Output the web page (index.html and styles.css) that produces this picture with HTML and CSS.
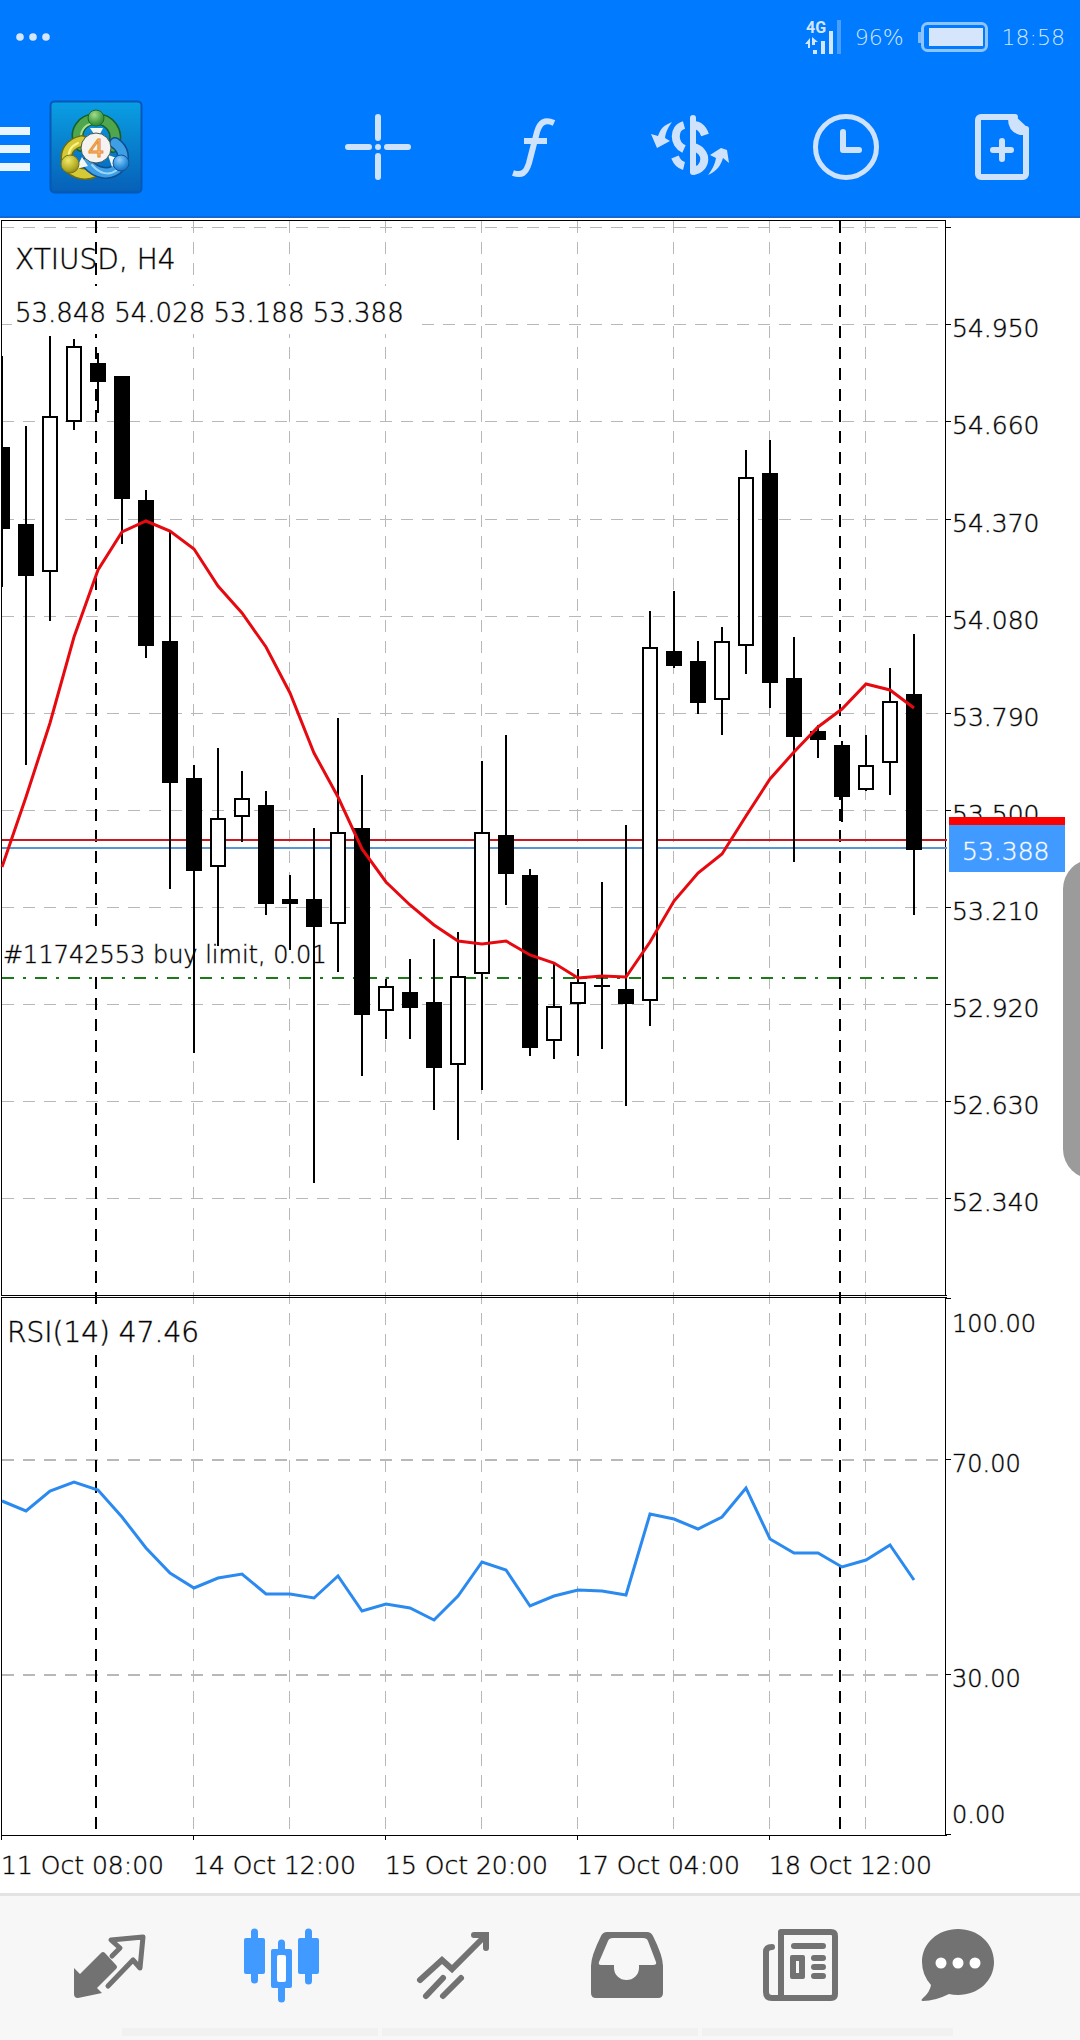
FILE: index.html
```html
<!DOCTYPE html>
<html lang="en">
<head>
<meta charset="utf-8">
<meta name="viewport" content="width=device-width, initial-scale=1">
<title>XTIUSD, H4</title>
<link rel="stylesheet" href="styles.css">
</head>
<body>
<div class="app">
  <header class="header">
    <div class="status">
      <svg class="status-dots" viewBox="0 0 36 10" aria-hidden="true"><circle cx="5" cy="5" r="3.8"/><circle cx="18" cy="5" r="3.8"/><circle cx="31" cy="5" r="3.8"/></svg>
      <div class="status-info">
        <svg class="signal" viewBox="0 0 36 36" aria-label="4G signal">
          <text x="1" y="14" class="signal-text">4G</text>
          <path d="M0 25l5-6v10h-2v-4zM7 18l6 5h-3v3h-3zM8 31h4v4h-4zM16 22h4v13h-4zM24 12h4v23h-4z"/>
          <path d="M32 1h4v34h-4z" opacity=".35"/>
        </svg>
        <span>96%</span>
        <svg class="battery" viewBox="0 0 70 32" aria-hidden="true">
          <rect x="4.500" y="2.500" width="64" height="27" rx="5" class="battery-frame"/>
          <path d="M0 11h3v11H0z" opacity=".6"/><path d="M11 7h54v18H11z"/>
        </svg>
        <time>18:58</time>
      </div>
    </div>
    <div class="toolbar">
      <button class="menu" type="button" aria-label="Menu">
        <svg class="menu-icon" viewBox="0 0 142 92" aria-hidden="true">
          <defs>
            <linearGradient id="tile" x1="0" y1="0" x2="0" y2="1"><stop offset="0" stop-color="#0a9fe4"/><stop offset=".5" stop-color="#087fcd"/><stop offset="1" stop-color="#0660b8"/></linearGradient>
            <radialGradient id="green" cx=".4" cy=".3" r=".8"><stop offset="0" stop-color="#a5dc8c"/><stop offset=".6" stop-color="#45a046"/><stop offset="1" stop-color="#237a32"/></radialGradient>
            <radialGradient id="yellow" cx=".4" cy=".3" r=".8"><stop offset="0" stop-color="#f1e868"/><stop offset=".6" stop-color="#b8b02a"/><stop offset="1" stop-color="#7d7a14"/></radialGradient>
            <radialGradient id="blue" cx=".4" cy=".3" r=".8"><stop offset="0" stop-color="#8fd0fa"/><stop offset=".6" stop-color="#2f8fdc"/><stop offset="1" stop-color="#1460a8"/></radialGradient>
          </defs>
          <path d="M0 26h30v8H0zM0 44h30v8H0zM0 62h30v8H0z" fill="#e9f6ff"/>
          <rect x="50.500" y=".5" width="91" height="91" rx="4" fill="url(#tile)" stroke="#0558b5" stroke-width="2"/>
          <g fill="none" stroke-linecap="round">
            <path d="M81 45c-9-15 2-27 15-27s24 12 17 28" stroke="#155f2a" stroke-width="12"/>
            <path d="M81 45c-9-15 2-27 15-27s24 12 17 28" stroke="#4fa64c" stroke-width="9"/>
            <path d="M81 38c-1-10 6-16 15-16" stroke="#a9dd94" stroke-width="2"/>
            <path d="M82 40c-13 3-17 12-15 21 3 10 16 15 27 10" stroke="#6f6c10" stroke-width="12"/>
            <path d="M82 40c-13 3-17 12-15 21 3 10 16 15 27 10" stroke="#d5c935" stroke-width="9"/>
            <path d="M78 42c-9 4-10 10-9 16" stroke="#fbf38a" stroke-width="2"/>
            <path d="M115 42c9 6 10 16 5 23-9 11-24 8-33-3" stroke="#0d4e92" stroke-width="12"/>
            <path d="M115 42c9 6 10 16 5 23-9 11-24 8-33-3" stroke="#3e9fe4" stroke-width="9"/>
            <path d="M92 64c8 9 17 11 25 5" stroke="#9cd7fb" stroke-width="2"/>
          </g>
          <path d="M82 56l-6 12 12-3zM108 54l4 12 8-8zM90 27l4 6h6l3-6z" fill="#f2f7f2"/>
          <circle cx="96" cy="17" r="8" fill="url(#green)" stroke="#1c692b"/>
          <circle cx="70" cy="63" r="9" fill="url(#yellow)" stroke="#77730f"/>
          <circle cx="121" cy="62" r="8" fill="url(#blue)" stroke="#10559b"/>
          <circle cx="96" cy="47" r="15" fill="#f4f3f1" stroke="#46564e"/>
          <text x="96" y="56" class="logo-digit">4</text>
        </svg>
      </button>
      <button class="tool" type="button" aria-label="Crosshair"><svg viewBox="0 0 72 72" class="line"><path d="M6 36h21M45 36h21M36 6v21M36 45v21"/><circle cx="36" cy="36" r="3" class="solid"/></svg></button>
      <button class="tool" type="button" aria-label="Indicators"><svg viewBox="0 0 72 72" class="line butt"><path d="M56 12c-9-4-14-1-17 9l-8 31c-3 10-7 13-16 10M26 30h23"/></svg></button>
      <button class="tool" type="button" aria-label="Trade"><svg viewBox="0 0 72 72" class="line"><path d="M39 7v54"/><path class="butt thick" d="M30 14c-11 3-11 19 0 24M39 14c7 0 10 4 12 10M39 36c16 4 14 22 0 24M21 46c2 5 5 8 9 9"/><path class="solid" d="M18 11C9 15 7 17 4 25L-3 23 3 37 16 30 11 27C12 20 14 17 18 11zM54 64c9-4 13-10 15-17l6 5-2-13-6-2-11 7 6 3c-1 7-5 13-8 17z"/></svg></button>
      <button class="tool" type="button" aria-label="Timeframe"><svg viewBox="0 0 72 72" class="line"><circle cx="36" cy="36" r="30.500" class="ring"/><path d="M33 21v18h16"/></svg></button>
      <button class="tool" type="button" aria-label="New order"><svg viewBox="0 0 72 72" class="line"><path d="M49 6H15a3 3 0 0 0-3 3v54a3 3 0 0 0 3 3h42a3 3 0 0 0 3-3V18"/><path class="solid" d="M47 3l16 15v6h-9q-12-3-12-16z"/><path d="M36 30v18M27 39h18"/></svg></button>
    </div>
  </header>

  <main class="chart">
    <svg class="chart-svg" viewBox="0 218 1080 1675" role="img" aria-label="XTIUSD four hour candles with moving average and RSI">
      <!-- grid -->
      <g class="grid">
        <path d="M2 227.500H945M2 324.500H945M2 421.500H945M2 519.500H945M2 616.500H945M2 713.500H945M2 810.500H945M2 907.500H945M2 1004.500H945M2 1101.500H945M2 1198.500H945"/>
        <path d="M193.500 221V1835M289.500 221V1835M385.500 221V1835M481.500 221V1835M577.500 221V1835M673.500 221V1835M769.500 221V1835M865.500 221V1835"/>
        <path class="levels" d="M2 1460H945M2 1675H945"/>
      </g>
      <path class="day" d="M96 221V1835M840 221V1835"/>
      <path fill="#fff" d="M12 286h404v48H12zM4 1306h202v46H4zM3 928h325v46H3z"/>
      <!-- frames and ticks -->
      <path class="frame" d="M1.500 1295.500V220.500H945.500V1295.500M1 1295.500H947M1 1297.500H947M1.500 1297.500V1840M945.500 1297.500V1835.500M1 1835.500H947"/>
      <path class="frame" d="M945 227.500h6M945 324.500h6M945 421.500h6M945 519.500h6M945 616.500h6M945 713.500h6M945 810.500h6M945 907.500h6M945 1004.500h6M945 1101.500h6M945 1198.500h6M945 1298.500h6M945 1459.500h6M945 1674.500h6M945 1834.500h6M193.500 1835v5M385.500 1835v5M577.500 1835v5M769.500 1835v5"/>
      <!-- ask, bid and pending order -->
      <path class="ask" d="M2 840H947"/>
      <path class="bid" d="M2 848H947"/>
      <path class="order" d="M2 978H945"/>
      <!-- candles -->
      <path class="wick" d="M2 356V587M26 426V765M50 336V621M74 339V430M98 353V413M122 376V544M146 490V658M170 532V889M194 765V1053M218 748V946M242 771V842M266 791V915M290 875V950M314 828V1183M338 718V972M362 775V1076M386 979V1039M410 959V1039M434 939V1110M458 932V1140M482 761V1090M506 735V905M530 869V1056M554 963V1059M578 969V1056M602 882V1049M626 825V1106M650 611V1026M674 591V668M698 641V714M722 627V735M746 450V674M770 440V708M794 637V862M818 725V758M842 741V822M866 735V791M890 668V795M914 634V915"/>
      <path class="bear" d="M2 447h8v82h-8zM18 524h16v52h-16zM90 363h16v19h-16zM114 376h16v123h-16zM138 500h16v146h-16zM162 641h16v142h-16zM186 778h16v93h-16zM258 805h16v99h-16zM282 899h16v5h-16zM306 899h16v28h-16zM354 828h16v187h-16zM402 992h16v16h-16zM426 1002h16v66h-16zM498 835h16v39h-16zM522 875h16v173h-16zM594 985h16v2h-16zM618 989h16v15h-16zM666 651h16v15h-16zM690 661h16v42h-16zM762 473h16v210h-16zM786 678h16v59h-16zM810 731h16v9h-16zM834 745h16v52h-16zM906 694h16v156h-16z"/>
      <path class="bull" d="M43 417h14v154h-14zM67 347h14v74h-14zM211 819h14v47h-14zM235 799h14v17h-14zM331 833h14v90h-14zM379 987h14v23h-14zM451 977h14v87h-14zM475 833h14v140h-14zM547 1007h14v33h-14zM571 983h14v20h-14zM643 648h14v352h-14zM715 642h14v57h-14zM739 478h14v167h-14zM859 766h14v23h-14zM883 702h14v60h-14z"/>
      <!-- moving average and RSI -->
      <polyline class="average" points="2,867 26,797 50,723 74,637 98,570 122,532 146,521 170,531 194,549 218,586 242,613 266,647 290,693 314,753 338,797 362,849 386,882 410,905 434,925 458,941 482,944 506,941 530,955 554,963 578,978 602,976 626,977 650,942 674,901 698,873 722,854 746,816 770,779 794,752 818,727 842,709 866,684 890,690 914,708"/>
      <polyline class="rsi" points="2,1501 26,1511 50,1491 74,1482 98,1490 122,1517 146,1548 170,1573 194,1588 218,1578 242,1574 266,1594 290,1594 314,1598 338,1576 362,1611 386,1604 410,1608 434,1620 458,1596 482,1562 506,1570 530,1606 554,1596 578,1590 602,1591 626,1595 650,1514 674,1519 698,1529 722,1517 746,1488 770,1539 794,1553 818,1553 842,1567 866,1560 890,1545 914,1580"/>
      <!-- labels -->
      <g class="label large">
        <text x="15" y="269">XTIUSD, H4</text>
        <text x="7" y="1342">RSI(14) 47.46</text>
      </g>
      <text class="label" x="15" y="322">53.848 54.028 53.188 53.388</text>
      <text class="label small" x="3" y="963">#11742553 buy limit, 0.01</text>
      <g class="label axis">
        <text x="952" y="337">54.950</text><text x="952" y="434">54.660</text><text x="952" y="532">54.370</text><text x="952" y="629">54.080</text><text x="952" y="726">53.790</text><text x="952" y="823">53.500</text><text x="952" y="920">53.210</text><text x="952" y="1017">52.920</text><text x="952" y="1114">52.630</text><text x="952" y="1211">52.340</text>
      </g>
      <g class="label small">
        <text x="952" y="1332">100.00</text><text x="952" y="1472">70.00</text><text x="952" y="1687">30.00</text><text x="952" y="1823">0.00</text>
      </g>
      <g class="label axis">
        <text x="1" y="1874">11 Oct 08:00</text><text x="193" y="1874">14 Oct 12:00</text><text x="385" y="1874">15 Oct 20:00</text><text x="577" y="1874">17 Oct 04:00</text><text x="769" y="1874">18 Oct 12:00</text>
      </g>
      <path fill="#f00" d="M949 817h116v8H949z"/>
      <path fill="#409aff" d="M949 825h116v47H949z"/>
      <text class="label axis current" x="962" y="860">53.388</text>
      <rect class="handle" x="1063" y="859" width="60" height="320" rx="30"/>
    </svg>
  </main>

  <nav class="tabs" aria-label="Sections">
    <div class="tab-row">
      <a class="tab" href="#quotes" aria-label="Quotes"><svg viewBox="0 0 88 88"><path class="fill" d="M8 50l6 6 21-21q2-2 4 0l11 12q2 2 0 4L31 70l5 5-24 5q-4 0-4-4z"/><path class="outline thin" d="M46 38l8-8-9-8 32-3-3 31-7-8-25 26"/></svg></a>
      <a class="tab active" href="#chart" aria-label="Chart" aria-current="page"><svg viewBox="0 0 88 88"><path class="outline wide" d="M16.500 14v48M70.500 14v49M43.500 25v8M43.500 68v13"/><rect class="fill" x="6" y="20" width="21" height="36" rx="2"/><rect class="fill" x="60" y="20" width="21" height="36" rx="2"/><rect class="fill" x="33" y="31" width="21" height="39" rx="2"/><rect x="39" y="37" width="9" height="27" rx="2" fill="#fff"/></svg></a>
      <a class="tab" href="#trade" aria-label="Trade"><svg viewBox="0 0 88 88"><path class="outline" d="M10 62l22-20 10 9 33-33M64 17h12v13M33 60L16 78M51 60L33 78"/></svg></a>
      <a class="tab" href="#history" aria-label="History"><svg viewBox="0 0 88 88"><path class="fill" fill-rule="evenodd" d="M25 14h40q4 0 6 4 10 20 10 30v27q0 5-5 5H14q-5 0-5-5V48q0-10 10-30 2-4 6-4zm6 6q-4 0-5 3l-9 21q-1 3 2 3h13v3a12.500 12 0 0 0 25 0v-3h14q4 0 3-3l-8-21q-1-3-5-3z"/></svg></a>
      <a class="tab" href="#news" aria-label="News"><svg viewBox="0 0 88 88"><path class="outline" d="M28 14h49q4 0 4 4v58q0 4-4 4H18q-6 0-6-6V34q0-5 6-5M27 14v65"/><path class="outline" d="M40 28h29M60 40h9M60 49h9M60 58h9"/><path class="fill" fill-rule="evenodd" d="M38 37h11q2 0 2 2v20q0 2-2 2H38q-2 0-2-2V39q0-2 2-2zm4 6v12h3V43z"/></svg></a>
      <a class="tab" href="#chat" aria-label="Messages"><svg viewBox="0 0 88 88"><path class="fill" d="M44 11c20 0 36 14 36 33S64 77 44 77q-5 0-9-1-14 7-26 7-3 0 0-3 7-6 8-13Q8 57 8 44c0-19 16-33 36-33z"/><g fill="#fff"><circle cx="27" cy="45" r="5.500"/><circle cx="44" cy="45" r="5.500"/><circle cx="61" cy="45" r="5.500"/></g></svg></a>
    </div>
    <div class="strip" aria-hidden="true"><span></span><span></span><span></span></div>
  </nav>
</div>
</body>
</html>
```

FILE: styles.css
```css
* { box-sizing: border-box; }

body {
  margin: 0;
  background: #fff;
  font-family: "DejaVu Sans Light", "DejaVu Sans", sans-serif;
  font-weight: 200;
}

.app { display: flex; flex-direction: column; min-height: 100vh; }

.header { background: #007aff; color: #cfe2fb; border-bottom: 2px solid #1167d6; }

.status {
  display: flex;
  align-items: center;
  justify-content: space-between;
  height: 76px;
  padding: 0 15px 2px 15px;
  color: #d5e6fc;
  font-size: 22px;
}
.status svg { fill: currentColor; }
.status-dots { width: 36px; height: 10px; }
.status-info { display: flex; align-items: center; gap: 14px; }
.signal { width: 36px; height: 36px; }
.signal-text { font: bold 16px "Roboto", sans-serif; }
.battery { width: 70px; height: 32px; }
.battery .battery-frame { fill: none; stroke: #8fc5fe; stroke-width: 3; }

.toolbar {
  display: grid;
  grid-template-columns: 300fr repeat(5, 156fr);
  height: 140px;
  padding-top: 2px;
}
.toolbar button {
  display: flex;
  align-items: center;
  justify-content: center;
  margin: 0;
  padding: 0;
  border: 0;
  background: none;
}
.toolbar .menu { justify-content: flex-start; }
.menu-icon { width: 142px; height: 92px; overflow: visible; }
.logo-digit {
  font: 26px "Open Sans", sans-serif;
  fill: #fbc27c;
  stroke: #e78a2e;
  stroke-width: 1px;
  text-anchor: middle;
}
.tool svg { width: 72px; height: 72px; overflow: visible; }
.line {
  fill: none;
  stroke: #cfe2fb;
  stroke-width: 6px;
  stroke-linecap: round;
  stroke-linejoin: round;
}
.butt { stroke-linecap: butt; }
.thick { stroke-width: 8px; }
.ring { stroke-width: 5px; }
.solid { fill: #cfe2fb; stroke: none; }

.chart-svg { display: block; width: 100%; height: auto; }
.chart-svg path { shape-rendering: crispEdges; }
.grid { fill: none; stroke: #b8b8b8; stroke-width: 1px; stroke-dasharray: 12 9; }
.levels { stroke-width: 2px; }
.day { stroke: #000; stroke-width: 2px; stroke-dasharray: 12 9; }
.frame { fill: none; stroke: #000; stroke-width: 1px; }
.ask { stroke: #c8191e; stroke-width: 2px; }
.bid { stroke: #5a95d0; stroke-width: 2px; }
.order { stroke: #1c7a18; stroke-width: 2px; stroke-dasharray: 12 9 3 9; }
.wick { stroke: #000; stroke-width: 2px; }
.bear { fill: #000; }
.bull { fill: #fff; stroke: #000; stroke-width: 2px; }
.average { fill: none; stroke: #e60a10; stroke-width: 3px; }
.rsi { fill: none; stroke: #2a8af0; stroke-width: 3px; }

.label {
  font-size: 26px;
  fill: #000;
  stroke: #000;
  stroke-width: 1px;
  stroke-opacity: .4;
}
.label.large { font-size: 28px; }
.label.axis { font-size: 25px; }
.label.small { font-size: 24px; }
.label.current { fill: #fff; stroke: #fff; }
.handle { fill: #9b9b9b; }

.tabs { background: #f7f7f7; border-top: 3px solid #e3e3e3; }
.tab-row {
  display: grid;
  grid-template-columns: repeat(5, 172fr) 148fr;
  height: 132px;
  padding: 0 48px 0 24px;
}
.tab { display: flex; align-items: center; justify-content: center; color: #727272; }
.tab.active { color: #409aff; }
.tab svg { width: 88px; height: 88px; flex: none; }
.fill { fill: currentColor; }
.outline {
  fill: none;
  stroke: currentColor;
  stroke-width: 6px;
  stroke-linecap: round;
  stroke-linejoin: miter;
}
.thin { stroke-width: 5px; stroke-linejoin: round; }
.wide { stroke-width: 7px; }
.strip {
  display: grid;
  grid-template-columns: 256fr 316fr 251fr;
  gap: 4px;
  height: 12px;
  padding: 0 127px 4px 122px;
}
.strip span { background: #f1f1f1; }
```
